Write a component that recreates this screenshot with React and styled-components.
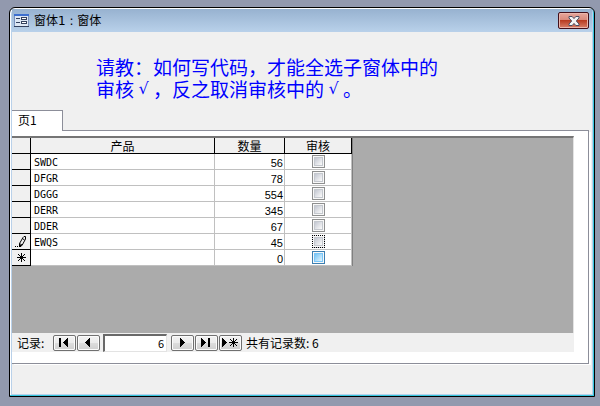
import React, { useState } from 'react';
import styled, { createGlobalStyle } from 'styled-components';

const records = [
    { product: 'SWDC', quantity: 56 },
    { product: 'DFGR', quantity: 78 },
    { product: 'DGGG', quantity: 554 },
    { product: 'DERR', quantity: 345 },
    { product: 'DDER', quantity: 67 },
    { product: 'EWQS', quantity: 45, state: 'editing' },
    { product: '', quantity: 0, state: 'new' },
]

// every glyph is drawn on a small pixel grid, so the edges stay sharp
function FormIcon() {
    return (
        <svg width="15" height="13" viewBox="0 0 15 13" shapeRendering="crispEdges" aria-hidden="true">
            <rect width="15" height="13" fill="#7a93be" />
            <rect x="0" y="0" width="15" height="2" fill="#3c6fd0" />
            <rect x="1" y="2" width="13" height="10" fill="#dde7f4" />
            <rect x="0" y="12" width="15" height="1" fill="#33415e" />
            <path d="M2 4h4v1h-4z M2 8h4v1h-4z" fill="#33415e" />
            <path d="M7 3h6v3h-6z M7 7h6v3h-6z" fill="#33415e" />
            <path d="M8 4h4v1h-4z M8 8h4v1h-4z" fill="#fff" />
        </svg>
    )
}

function CloseIcon() {
    return (
        <svg width="12" height="10" viewBox="0 0 12 10" aria-hidden="true">
            <path d="M1 .5h3.2L6 2.6 7.8.5H11V2L8.3 5 11 8v1.5H7.8L6 7.4 4.2 9.5H1V8l2.7-3L1 2z" fill="#f4f4f4" stroke="#4c4f63" />
        </svg>
    )
}

function PencilIcon() {
    return (
        <svg width="12" height="12" viewBox="0 0 12 12" aria-hidden="true">
            <path d="M0 10h1v1H0z M2 10h1v1H2z" shapeRendering="crispEdges" />
            <path d="M4.500 10.500V7.500L8 1.500L9 .5H10.500V3L7 9.500L4.500 10.500M7.500 2.500L9.500 4M4.500 7.500L7 9" fill="none" stroke="#000" />
            <path d="M4 9h2v2H4z" shapeRendering="crispEdges" />
        </svg>
    )
}

const starPath = 'M4 0h1v9H4z M0 4h9v1H0z M3 3h3v3H3z M1 1h1v1H1z M2 2h1v1H2z M7 1h1v1H7z M6 2h1v1H6z M1 7h1v1H1z M2 6h1v1H2z M7 7h1v1H7z M6 6h1v1H6z'

function StarIcon() {
    return (
        <svg width="9" height="9" viewBox="0 0 9 9" shapeRendering="crispEdges" aria-hidden="true">
            <path d={starPath} />
        </svg>
    )
}

// each arrow is five columns wide, from nine pixels high down to one
const rightArrow = 'M0 0h1v9H0z M1 1h1v7H1z M2 2h1v5H2z M3 3h1v3H3z M4 4h1v1H4z'
const leftArrow = 'M4 0h1v9H4z M3 1h1v7H3z M2 2h1v5H2z M1 3h1v3H1z M0 4h1v1H0z'

function NavIcon({ name }) {
    return (
        <svg width="17" height="9" viewBox="0 0 17 9" shapeRendering="crispEdges" aria-hidden="true">
            {name === 'first' && <path d="M3 0h2v9H3z" />}
            {name === 'first' && <path transform="translate(7)" d={leftArrow} />}
            {name === 'prev' && <path transform="translate(5)" d={leftArrow} />}
            {name === 'next' && <path transform="translate(6)" d={rightArrow} />}
            {name === 'last' && <path transform="translate(3)" d={rightArrow} />}
            {name === 'last' && <path d="M10 0h2v9h-2z" />}
            {name === 'new' && <path d={rightArrow} />}
            {name === 'new' && <path transform="translate(7)" d={starPath} />}
        </svg>
    )
}

function RecordRow({ record }) {
    const [checked, setChecked] = useState(false)

    return (
        <tr>
            <Selector $wide={record.state === 'editing'}>
                {record.state === 'editing' && <PencilIcon />}
                {record.state === 'new' && <StarIcon />}
            </Selector>
            <Cell>{record.product}</Cell>
            <Cell $number>{record.quantity}</Cell>
            <CheckCell>
                <CheckBox
                    type="checkbox"
                    aria-label={`审核 ${record.product}`}
                    checked={checked}
                    onChange={(event) => setChecked(event.target.checked)}
                    $state={record.state}
                />
            </CheckCell>
        </tr>
    )
}

function App() {
    const [position, setPosition] = useState('6')

    return (
        <Desktop>
            <GlobalStyle />
            <Window>
                <TitleBar>
                    <FormIcon />
                    <Title>窗体1 : 窗体</Title>
                    <CloseButton type="button" aria-label="关闭"><CloseIcon /></CloseButton>
                </TitleBar>
                <Body>
                    <Question>请教：如何写代码，才能全选子窗体中的<br />审核<Tick>√</Tick>，反之取消审核中的<Tick>√</Tick>。</Question>
                    <TabStrip role="tablist">
                        <Tab type="button" role="tab" aria-selected="true">页1</Tab>
                        <TabLine />
                    </TabStrip>
                    <Page>
                        <Subform>
                            <Sheet>
                                <Grid>
                                    <colgroup>
                                        <Col $width={19} />
                                        <Col $width={184} />
                                        <Col $width={70} />
                                        <Col $width={67} />
                                    </colgroup>
                                    <thead>
                                        <tr>
                                            <HeadCell />
                                            <HeadCell>产品</HeadCell>
                                            <HeadCell>数量</HeadCell>
                                            <HeadCell>审核</HeadCell>
                                        </tr>
                                    </thead>
                                    <tbody>
                                        {records.map((record, i) => <RecordRow key={i} record={record} />)}
                                    </tbody>
                                </Grid>
                            </Sheet>
                            <Navigator>
                                <NavLabel htmlFor="position">记录:</NavLabel>
                                <NavGroup>
                                    <NavButton type="button" aria-label="首记录"><NavIcon name="first" /></NavButton>
                                    <NavButton type="button" aria-label="上一记录"><NavIcon name="prev" /></NavButton>
                                </NavGroup>
                                <Position id="position" value={position} onChange={(event) => setPosition(event.target.value)} />
                                <NavGroup>
                                    <NavButton type="button" aria-label="下一记录"><NavIcon name="next" /></NavButton>
                                    <NavButton type="button" aria-label="尾记录"><NavIcon name="last" /></NavButton>
                                    <NavButton type="button" aria-label="新记录"><NavIcon name="new" /></NavButton>
                                </NavGroup>
                                <Total>共有记录数: 6</Total>
                            </Navigator>
                        </Subform>
                    </Page>
                </Body>
            </Window>
        </Desktop>
    )
}

export default App

const GlobalStyle = createGlobalStyle`
    * {
        box-sizing: border-box;
    }
    body {
        margin: 0;
        background: #9299ae;
        color: #000;
        font: 12px/16px "Noto Sans CJK SC", sans-serif;
    }
    button, input {
        font: inherit;
        color: inherit;
        margin: 0;
    }
    svg {
        display: block;
        flex-shrink: 0;
    }
`
const Desktop = styled.div`
    display: flex;
    min-height: 100vh;
    padding: 7px 5px 9px 9px;
`
const Window = styled.section`
    flex: 1;
    min-width: 0;
    display: flex;
    flex-direction: column;
    border: 1px solid #000;
    border-radius: 6px 6px 0 0;
    overflow: hidden;
    background: #b9d1ea;
    // thin cyan glow along the right and bottom edges
    box-shadow: inset -1px -1px #35c5dc, inset 1px 1px #fff;
    padding: 1px 2px 2px 2px;
`
const TitleBar = styled.header`
    display: flex;
    align-items: center;
    height: 23px;
    padding: 0 3px 0 2px;
    background: linear-gradient(#97b2d0, #b9d1ea);
`
const Title = styled.h1`
    flex: 1;
    margin: 0 0 0 5px;
    font-family: "DejaVu Sans", "Noto Sans CJK SC", sans-serif;
    font-size: 12px;
    font-weight: 400;
`
const CloseButton = styled.button`
    display: flex;
    align-items: center;
    justify-content: center;
    width: 31px;
    height: 17px;
    padding: 0;
    border: 1px solid #43101b;
    border-radius: 2px;
    background: linear-gradient(#e7a79c, #d98a7c 45%, #b83c22 50%, #d9806a);
    box-shadow: inset 0 0 0 1px #eab5ab;
`
const Body = styled.main`
    flex: 1;
    display: flex;
    flex-direction: column;
    padding-bottom: 30px;
    background: #f0f0f0;
`
const Question = styled.p`
    margin: 0;
    padding: 24px 16px 10px 84px;
    color: #0000ff;
    font-size: 19px;
    line-height: 22px;
`
// takes one full character cell without making its line taller
const Tick = styled.span`
    display: inline-block;
    width: 19px;
    font-family: "DejaVu Sans", sans-serif;
    font-size: 16px;
    line-height: 22px;
    text-align: center;
    vertical-align: top;
`
const TabStrip = styled.div`
    display: flex;
    align-items: flex-end;
    padding-right: 3px;
`
const Tab = styled.button`
    width: 51px;
    height: 21px;
    padding: 0 0 2px 6px;
    border: 0;
    border-top: 1px solid #8c8e99;
    border-right: 1px solid #8c8e99;
    background: #fff;
    text-align: left;
`
const TabLine = styled.div`
    flex: 1;
    height: 1px;
    background: #8c8e99;
`
const Page = styled.div`
    flex: 1;
    display: flex;
    margin-right: 3px;
    padding: 5px 14px 11px 0;
    border-right: 1px solid #8c8e99;
    border-bottom: 1px solid #8c8e99;
    background: #fff;
    box-shadow: 2px 1px #fff;
`
const Subform = styled.div`
    flex: 1;
    display: flex;
    flex-direction: column;
    min-width: 0;
`
const Sheet = styled.div`
    flex: 1;
    border-top: 2px solid #757575;
    border-right: 1px solid #e3e3e3;
    background: #ababab;
`
const Grid = styled.table`
    table-layout: fixed;
    width: 341px;
    border-collapse: separate;
    border-spacing: 0;
    border-right: 1px solid #808080;
    background: #fff;
    line-height: 15px;
`
const Col = styled.col`
    width: ${(props) => props.$width}px;
`
const HeadCell = styled.th`
    height: 16px;
    padding: 0;
    border-right: 1px solid #000;
    border-bottom: 1px solid #000;
    background: #f0f0f0;
    font-weight: 400;
`
const Selector = styled.td`
    height: 16px;
    padding: 0 0 0 ${(props) => props.$wide ? 3 : 5}px;
    border-right: 1px solid #000;
    border-bottom: 1px solid #000;
    background: #f0f0f0;
`
const Cell = styled.td`
    height: 16px;
    padding: 3px 1px 0 3px;
    border-right: 1px solid #c0c0c0;
    border-bottom: 1px solid #c0c0c0;
    font-family: ${(props) => props.$number ? '"Liberation Sans", sans-serif' : '"DejaVu Sans Mono", monospace'};
    font-size: ${(props) => props.$number ? 11 : 10}px;
    line-height: 12px;
    text-align: ${(props) => props.$number ? 'right' : 'left'};
`
const CheckCell = styled.td`
    height: 16px;
    padding: 0 0 0 27px;
    border-right: 1px solid #c0c0c0;
    border-bottom: 1px solid #c0c0c0;
`
const CheckBox = styled.input`
    appearance: none;
    display: block;
    width: 13px;
    height: 13px;
    border: 1px ${(props) => props.$state === 'editing' ? 'dotted' : 'solid'};
    border-color: ${(props) => props.$state === 'new' ? '#3c7fb1' : props.$state === 'editing' ? '#000' : '#8e8f8f'};
    background: ${(props) => props.$state === 'new'
        ? 'linear-gradient(135deg, #79c6f5 20%, #e0f4fe 80%)'
        : 'linear-gradient(135deg, #c4c8d2 20%, #fafafa 80%)'};
    box-shadow: inset 0 0 0 1px #f8f8f8, inset 0 0 0 2px ${(props) => props.$state === 'new' ? '#79c6f9' : '#c4c8ce'};

    &:checked {
        background: #2a4b8d;
    }
`
const Navigator = styled.div`
    display: flex;
    align-items: center;
    height: 19px;
    padding-left: 5px;
    background: #f0f0f0;
`
const NavLabel = styled.label`
    width: 36px;
`
const NavGroup = styled.div`
    display: flex;
    gap: 1px;
`
const NavButton = styled.button`
    display: flex;
    align-items: center;
    justify-content: center;
    width: 23px;
    height: 16px;
    padding: 0;
    border: 1px solid #707070;
    border-radius: 2px;
    background: linear-gradient(#f2f2f2, #ebebeb 50%, #dddddd 50%, #cfcfcf);
    box-shadow: inset 0 0 0 1px #fbfbfb;
`
const Position = styled.input`
    width: 64px;
    height: 18px;
    margin: 0 4px 0 3px;
    padding: 0 2px;
    border: 1px solid #e3e3e3;
    border-top: 2px solid #696969;
    border-left: 2px solid #696969;
    background: #fff;
    font-size: 11px;
    text-align: right;
`
const Total = styled.span`
    margin-left: 4px;
`
